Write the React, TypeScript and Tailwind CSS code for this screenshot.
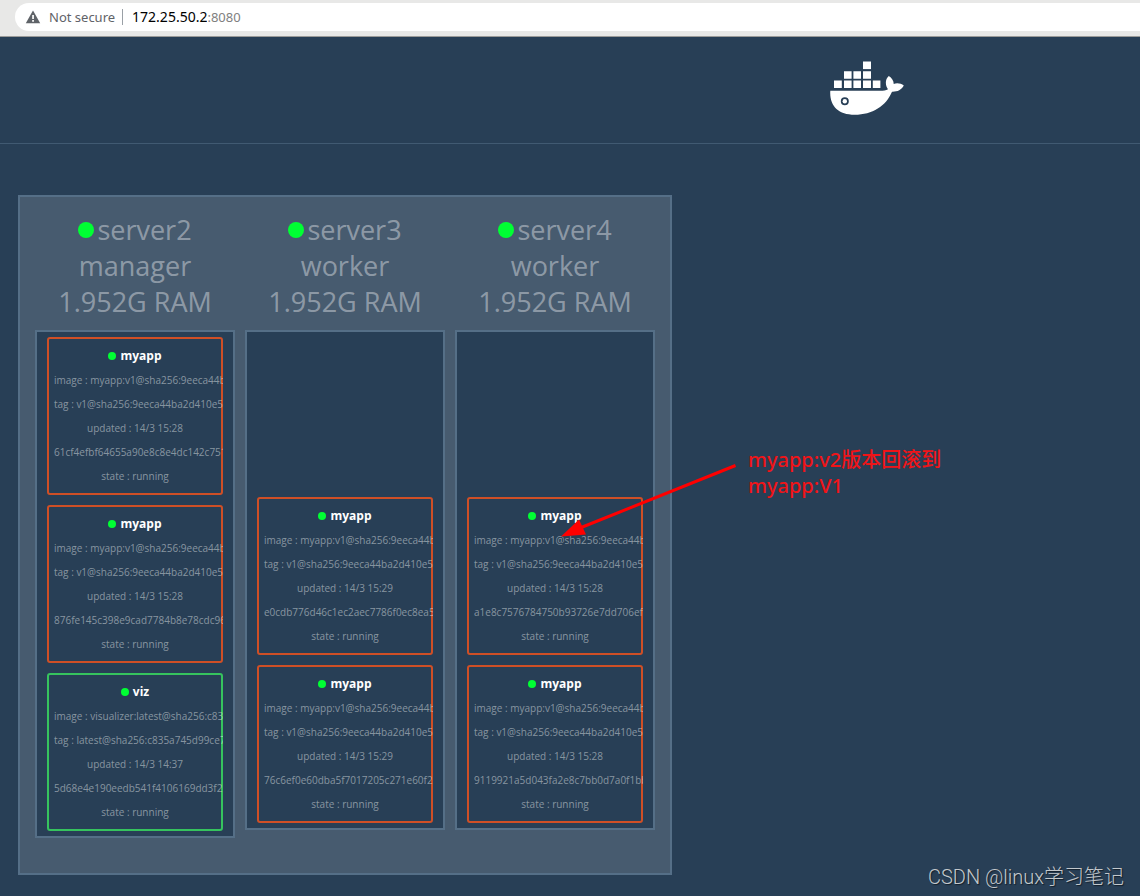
import { clsx } from 'clsx';

interface Task {
  name: string;
  image: string;
  tag: string;
  updated: string;
  id: string;
}

interface SwarmNode {
  name: string;
  role: string;
  tasks: Task[];
}

const myapp = (updated: string, id: string): Task => ({
  name: 'myapp',
  image: 'myapp:v1@sha256:9eeca44b',
  tag: 'v1@sha256:9eeca44ba2d410e5',
  updated,
  id,
});

const NODES: SwarmNode[] = [
  {
    name: 'server2',
    role: 'manager',
    tasks: [
      myapp('14/3 15:28', '61cf4efbf64655a90e8c8e4dc142c751'),
      myapp('14/3 15:28', '876fe145c398e9cad7784b8e78cdc96'),
      {
        name: 'viz',
        image: 'visualizer:latest@sha256:c83',
        tag: 'latest@sha256:c835a745d99ce7',
        updated: '14/3 14:37',
        id: '5d68e4e190eedb541f4106169dd3f2',
      },
    ],
  },
  {
    name: 'server3',
    role: 'worker',
    tasks: [
      myapp('14/3 15:29', 'e0cdb776d46c1ec2aec7786f0ec8ea5'),
      myapp('14/3 15:29', '76c6ef0e60dba5f7017205c271e60f2'),
    ],
  },
  {
    name: 'server4',
    role: 'worker',
    tasks: [
      myapp('14/3 15:28', 'a1e8c7576784750b93726e7dd706ef'),
      myapp('14/3 15:28', '9119921a5d043fa2e8c7bb0d7a0f1bb'),
    ],
  },
];

function AddressBar() {
  return (
    <div className="h-[37px] bg-[#e8e8e7] border-b border-[#9b9b99] pt-[3px] pl-[15px] font-['Noto_Sans',sans-serif] text-[13px] leading-5">
      <div className="flex h-7 items-center rounded-l-full bg-white pl-2.5">
        <button className="flex items-center gap-2 text-[#5f6368]">
          <svg viewBox="0 0 16 14" className="h-[14px] w-4" aria-hidden="true">
            <path d="M8 0.5 15.2 13.3H0.8Z" fill="#5f6368" />
            <path d="M7.2 5h1.7v4H7.2zM7.2 10.1h1.7v1.7H7.2z" fill="#fff" />
          </svg>
          Not secure
        </button>
        <span className="ml-[7px] mr-[9px] h-4 w-px bg-[#9aa0a6]" />
        <input
          aria-label="Host"
          defaultValue="172.25.50.2"
          className="field-sizing-content text-[14px] text-black outline-none"
        />
        <input
          aria-label="Port"
          defaultValue=":8080"
          className="field-sizing-content text-[#808080] outline-none"
        />
      </div>
    </div>
  );
}

function DockerLogo() {
  return (
    <svg viewBox="0 0 74 54" className="h-[54px] w-[74px]" fill="#fff" role="img" aria-label="Docker">
      <path d="M33 .5h8v7.6h-8z" />
      <path d="M14 10.2h7.6v7.6H14zM23.4 10.2H31v7.6h-7.6zM33 10.2h8v7.6h-8z" />
      <path d="M4 19.5h7.8v7.6H4zM14 19.5h7.6v7.6H14zM23.4 19.5H31v7.6h-7.6zM33 19.5h8v7.6h-8zM42.8 19.5h7.6v7.6h-7.6z" />
      <path
        fillRule="evenodd"
        d="M.3 29.700H50c3.500 0 6-.5 8-1.500C55.200 24.500 54.800 18.500 58.800 15c3 1.800 5 4.800 4.900 8 3-1.200 7.300-.7 10.100 1.500-2.300 4.500-6.700 6.400-11.800 6.200C56 45 42.500 53.700 24.700 53.700 8 53.700-.7 44.500.3 29.700ZM14.800 36.200a4 4 0 1 0 0 8 4 4 0 0 0 0-8Z"
      />
      <circle cx="14.800" cy="40.200" r="2.200" />
    </svg>
  );
}

function TaskCard({ task }: { task: Task }) {
  return (
    <li className="overflow-hidden">
      <div
        className={clsx(
          'rounded-[3px] border-2 p-[5px] text-center text-[10px] leading-6 whitespace-nowrap text-white/45',
          task.name === 'viz' ? 'border-[#36c35e]' : 'border-[#cf4f26]'
        )}
      >
        <h3 className="flex items-center justify-center gap-1 text-xs leading-6 font-bold text-white">
          <span className="h-2 w-2 rounded-full bg-[#00ff33]" />
          {task.name}
        </h3>
        <p>image : {task.image}</p>
        <p>tag : {task.tag}</p>
        <p>updated : {task.updated}</p>
        <p>{task.id}</p>
        <p>state : running</p>
      </div>
    </li>
  );
}

function NodeColumn({ node }: { node: SwarmNode }) {
  return (
    <section className="w-[200px]">
      <div className="text-center text-[27px] leading-9 text-white/40">
        <h2 className="flex items-center justify-center gap-[3px]">
          <span className="h-4 w-4 rounded-full bg-[#00ff33]" />
          {node.name}
        </h2>
        <p>{node.role}</p>
        <p>1.952G RAM</p>
      </div>
      <ul className="mt-2.5 flex min-h-[500px] flex-col justify-end gap-2.5 border-2 border-[#556f87] bg-[#283f56] px-2.5 py-[5px]">
        {node.tasks.map((task) => (
          <TaskCard key={task.id} task={task} />
        ))}
      </ul>
    </section>
  );
}

function Annotation() {
  return (
    <div className="absolute top-[447px] left-[560px] flex">
      <svg width="188" height="100" viewBox="0 0 188 100" className="shrink-0" aria-hidden="true">
        <path d="M175.500 18.500 20 81" stroke="#f00" strokeWidth="3" />
        <path d="M1 89.500 19 72.500 26 87.500Z" fill="#f00" />
      </svg>
      <p className="font-['Noto_Sans','Noto_Sans_CJK_SC',sans-serif] text-xl leading-[26px] font-medium whitespace-nowrap text-[#f01418]">
        myapp:v2版本回滚到
        <br />
        myapp:V1
      </p>
    </div>
  );
}

export default function App() {
  return (
    <div className="relative min-h-screen bg-[#283f56] font-['Open_Sans',sans-serif]">
      <AddressBar />
      <header className="flex h-[107px] items-center justify-end border-b border-[#415a72] pr-[236px] pb-1">
        <DockerLogo />
      </header>
      <main className="px-[18px] pt-[51px] pb-[21px]">
        <div className="flex w-fit items-start gap-2.5 border-2 border-[#556f87] bg-[#475b6f] px-[15px] pt-[15px] pb-[35px]">
          {NODES.map((node) => (
            <NodeColumn key={node.name} node={node} />
          ))}
        </div>
      </main>
      <Annotation />
      <p className="absolute right-4 bottom-[5px] font-[Roboto,'Noto_Sans_CJK_SC',sans-serif] text-xl font-light text-[#c3c8cc] text-shadow-[1px_1px_1px_#0008]">
        CSDN @linux学习笔记
      </p>
    </div>
  );
}
